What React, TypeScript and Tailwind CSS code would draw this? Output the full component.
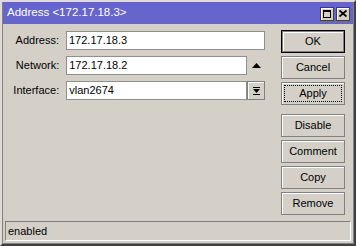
import React from "react";

const font = { fontFamily: '"Liberation Sans", Arial, sans-serif' };

function Btn({ label, def, focus }: { label: string; def?: boolean; focus?: boolean }) {
  if (def) {
    return (
      <div className="h-[23px] w-[64px] border border-black">
        <div className="h-full w-full border border-[#808080] shadow-[inset_1px_1px_0_#ffffff] flex items-center justify-center text-[11px] text-black">
          {label}
        </div>
      </div>
    );
  }
  return (
    <div className="h-[23px] w-[64px] border border-[#808080] shadow-[inset_1px_1px_0_#ffffff] flex items-center justify-center text-[11px] text-black p-[2px]">
      {focus ? (
        <div className="h-full w-full border border-dotted border-black flex items-center justify-center">{label}</div>
      ) : (
        label
      )}
    </div>
  );
}

function Field({ value, w }: { value: string; w: string }) {
  return (
    <div className={`h-[19px] ${w} bg-white border border-[#8f8f8f] flex items-center pl-[2px] text-[11px] text-black`}>
      {value}
    </div>
  );
}

export default function App() {
  return (
    <div style={font} className="w-[356px] h-[246px] bg-[#d4d0c8] border-2 border-t-[#dfdcd6] border-l-[#dfdcd6] border-r-[#404040] border-b-[#404040]">
      <div className="h-full w-full border-l border-r border-b border-[#808080] flex flex-col">
        <div className="h-[22px] bg-[#6565cb] flex items-center pl-[4px] pr-[3px]">
          <span className="text-white text-[11.5px] leading-none">Address &lt;172.17.18.3&gt;</span>
          <div className="ml-auto flex gap-[2px] mt-[1px]">
            <div className="w-[14px] h-[14px] bg-[#d4d0c8] border border-[#404040] shadow-[inset_1px_1px_0_#ffffff] flex items-center justify-center">
              <div className="w-[8px] h-[8px] border border-black border-t-2" />
            </div>
            <div className="w-[14px] h-[14px] bg-[#d4d0c8] border border-[#404040] shadow-[inset_1px_1px_0_#ffffff] flex items-center justify-center">
              <svg width="8" height="7" viewBox="0 0 8 7">
                <path d="M0.5 0.5 L7.5 6.5 M7.5 0.5 L0.5 6.5" stroke="black" strokeWidth="1.8" />
              </svg>
            </div>
          </div>
        </div>
        <div className="flex-1 flex flex-col">
          <div className="flex pt-[6px]">
            <div className="w-[262px] flex flex-col gap-[6px] pt-[1px]">
              <div className="flex items-center">
                <div className="w-[57px] text-right text-[11px] text-black">Address:</div>
                <div className="ml-[7px]"><Field value="172.17.18.3" w="w-[199px]" /></div>
              </div>
              <div className="flex items-center">
                <div className="w-[57px] text-right text-[11px] text-black">Network:</div>
                <div className="ml-[7px]"><Field value="172.17.18.2" w="w-[181px]" /></div>
                <div className="w-[18px] h-[19px] flex items-center justify-center">
                  <svg width="9" height="5" viewBox="0 0 9 5"><path d="M4.5 0 L9 5 L0 5 Z" fill="black" /></svg>
                </div>
              </div>
              <div className="flex items-center">
                <div className="w-[57px] text-right text-[11px] text-black">Interface:</div>
                <div className="ml-[7px]"><Field value="vlan2674" w="w-[181px]" /></div>
                <div className="w-[18px] h-[19px] border border-[#808080] shadow-[inset_1px_1px_0_#ffffff] flex items-center justify-center">
                  <svg width="7" height="8" viewBox="0 0 7 8">
                    <rect x="0" y="0" width="7" height="1" fill="black" />
                    <path d="M0 2 L7 2 L3.5 6 Z" fill="black" />
                    <rect x="0" y="7" width="7" height="1" fill="black" />
                  </svg>
                </div>
              </div>
            </div>
            <div className="ml-[16px] flex flex-col gap-[3px]">
              <Btn label="OK" def />
              <Btn label="Cancel" />
              <Btn label="Apply" focus />
              <div className="mt-[6px] flex flex-col gap-[3px]">
                <Btn label="Disable" />
                <Btn label="Comment" />
                <Btn label="Copy" />
                <Btn label="Remove" />
              </div>
            </div>
          </div>
          <div className="mt-auto mx-[2px] mb-[2px] h-[20px] border border-t-[#808080] border-l-[#808080] border-r-white border-b-white flex items-center pl-[2px] text-[11px] text-black">
            enabled
          </div>
        </div>
      </div>
    </div>
  );
}
